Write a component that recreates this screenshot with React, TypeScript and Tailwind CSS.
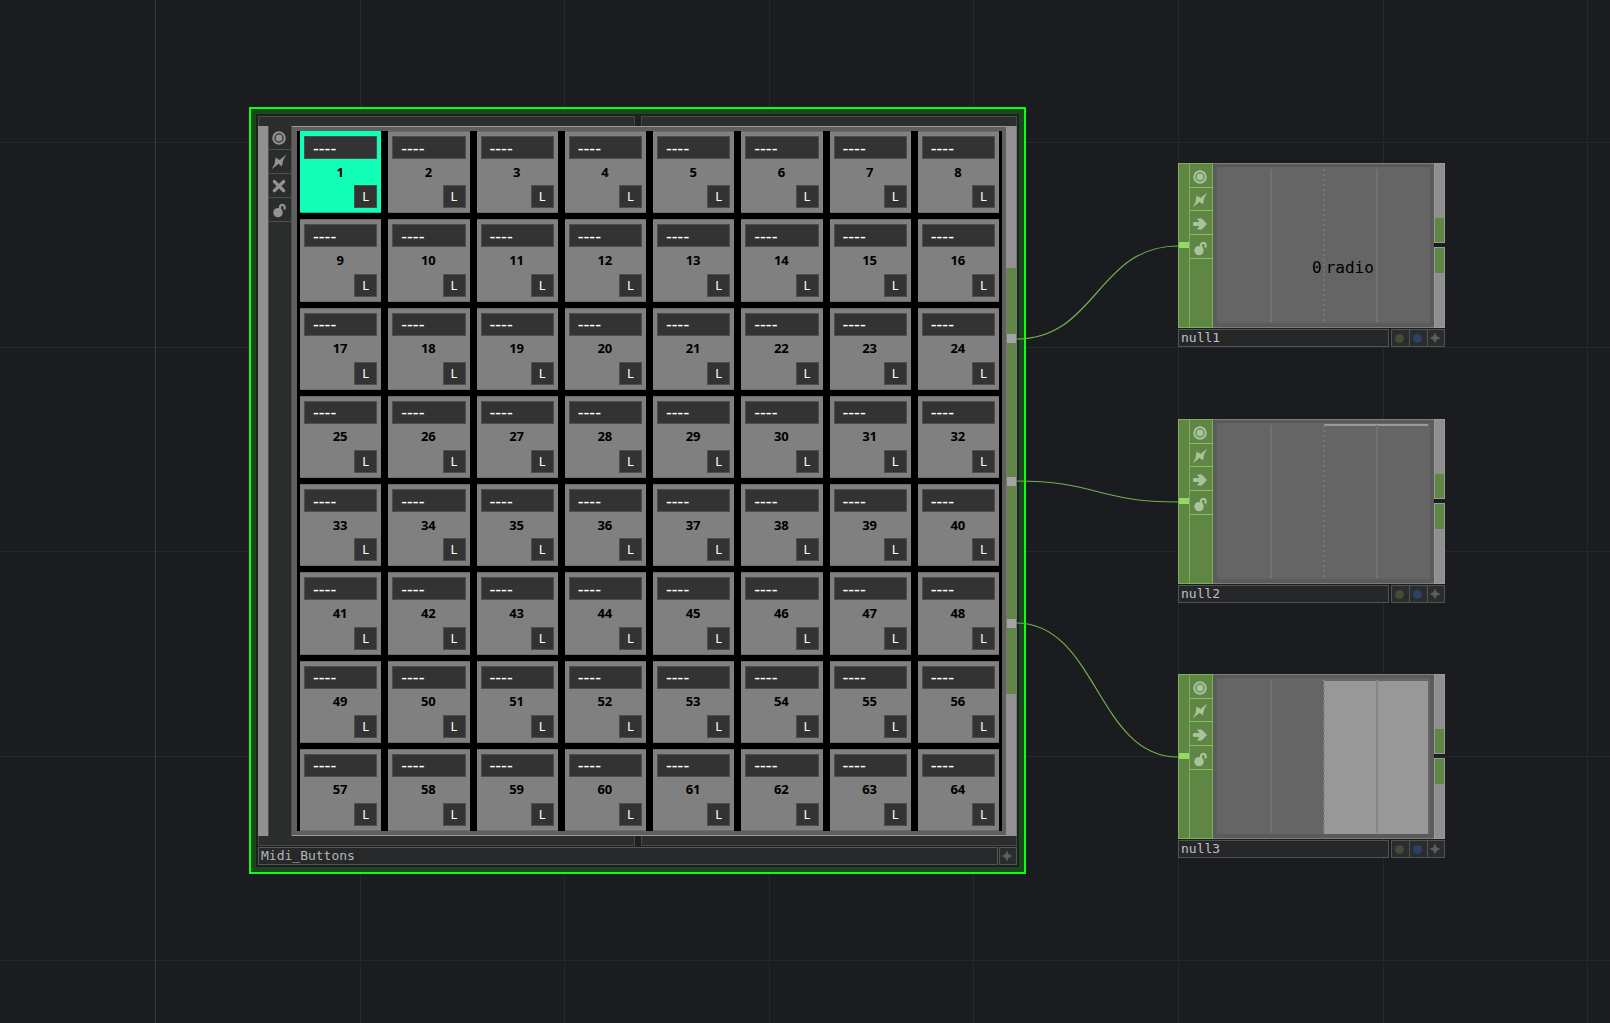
import React from 'react';

type IconKind = 'viewer' | 'bypass' | 'close' | 'arrow' | 'lock';

const LABELS: Record<IconKind, string> = {
  viewer: 'Viewer active',
  bypass: 'Clone immune',
  close: 'Bypass',
  arrow: 'Export',
  lock: 'Lock',
};

function Icon({ kind }: { kind: IconKind }) {
  return (
    <svg viewBox="0 0 16 16" className="size-4" aria-hidden="true">
      {kind === 'viewer' && (
        <>
          <circle cx="8" cy="8" r="5.7" fill="none" stroke="currentColor" strokeWidth="2.1" />
          <circle cx="8" cy="8" r="3.4" fill="currentColor" />
        </>
      )}
      {kind === 'bypass' && <path d="M.8 15.3 L3.6 10 L4.6 3.4 L8.6 6 L15.2 .7 L12.2 6.2 L10.8 12.4 L7.6 9.8 Z" fill="currentColor" />}
      {kind === 'close' && <path d="M3.4 3.6 L12.6 12.6 M12.6 3.6 L3.4 12.6" stroke="currentColor" strokeWidth="3.4" strokeLinecap="round" />}
      {kind === 'arrow' && (
        <>
          <path d="M2.6 8 H10" stroke="currentColor" strokeWidth="3.8" strokeLinecap="round" />
          <path d="M5 2.6 H9.6 L15 8 L9.6 13.4 H5 L8.8 8 Z" fill="currentColor" />
        </>
      )}
      {kind === 'lock' && (
        <>
          <circle cx="7" cy="10.6" r="4.7" fill="currentColor" />
          <path d="M9 7 V4.4 A2.5 2.5 0 0 1 13.6 4.4 V7.4" fill="none" stroke="currentColor" strokeWidth="2.2" />
        </>
      )}
    </svg>
  );
}

function Star() {
  return (
    <svg viewBox="0 0 12 12" className="size-3" aria-hidden="true">
      <path d="M6 .5 L7.7 4.3 L11.5 6 L7.7 7.7 L6 11.5 L4.3 7.7 L.5 6 L4.3 4.3 Z" fill="#5d5f5e" />
    </svg>
  );
}

function Rails({ edge }: { edge: string }) {
  return (
    <div className="flex h-[10px] gap-[6px]">
      <div className={`flex-1 border-x border-[#46484a] bg-[#2c2e2d] ${edge}`} />
      <div className={`flex-1 border-x border-[#46484a] bg-[#2c2e2d] ${edge}`} />
    </div>
  );
}

function Pad({ n, active }: { n: number; active: boolean }) {
  return (
    <div
      className={`grid grid-rows-[23px_1fr_23px] border-y px-1 py-1 ${
        active ? 'border-[#12ffb8] border-b-[#0fb98a] bg-[#12ffb8]' : 'border-[#6c6c6c] bg-[#808080]'
      }`}
    >
      <div className="flex items-center border border-[#4e4e4e] bg-[#333333] pl-2 text-[18px] leading-none text-white">----</div>
      <button type="button" className="flex items-center justify-center pr-px text-[13px] leading-none font-bold text-black">
        {n}
      </button>
      <button
        type="button"
        aria-label={`Learn ${n}`}
        className="flex size-[23px] items-center justify-center justify-self-end border border-[#4e4e4e] bg-[#333333] text-[13px] leading-none text-white"
      >
        L
      </button>
    </div>
  );
}

function MidiNode() {
  const pads = Array.from({ length: 64 }, (_, i) => i + 1);
  return (
    <section className="absolute top-[107px] left-[249px] border-2 border-[#0cff0c] bg-[#18481b] p-[5px]">
      <div className="bg-[#1e1f23] p-0.5">
        <Rails edge="border-t" />
        <div className="flex">
          <div className="w-[10px] bg-[#919191]" />
          <div className="w-6 border-x border-[#4f5050] bg-[#2b2d2c] text-[#939393]">
            {(['viewer', 'bypass', 'close', 'lock'] as IconKind[]).map((k) => (
              <button key={k} type="button" aria-label={LABELS[k]} className="flex h-6 w-full items-center justify-center border-b border-[#4f5050] pt-px pr-0.5">
                <Icon kind={k} />
              </button>
            ))}
          </div>
          <div className="border-y border-[#979797] bg-[#5f5f5f] py-1 pr-1 pl-[5px]">
            <div className="bg-black px-[3px]">
              <div className="grid h-[700px] w-[699px] grid-cols-8 grid-rows-8 gap-x-[7px] gap-y-[6px] font-['Noto_Sans',sans-serif]">
                {pads.map((n) => (
                  <Pad key={n} n={n} active={n === 1} />
                ))}
              </div>
            </div>
          </div>
          <div className="w-[11px] border-r border-[#77787a] bg-[#919191] pt-[142px]">
            <div className="flex h-[426px] flex-col justify-between border-l border-[#77787a] bg-[#5f8644] py-[66px]">
              <div className="h-[9px] bg-[#a3a3a8]" />
              <div className="h-[9px] bg-[#a3a3a8]" />
              <div className="h-[9px] bg-[#a3a3a8]" />
            </div>
          </div>
        </div>
        <Rails edge="border-b" />
        <div className="mt-px flex h-[18px] gap-px">
          <div className="flex flex-1 items-center border border-[#55575a] bg-[#27282a] pl-0.5 font-['DejaVu_Sans_Mono',monospace] text-[13px] leading-4 text-[#b5b5b5]">
            Midi_Buttons
          </div>
          <button type="button" aria-label="Activate viewer" className="flex w-[18px] items-center justify-center border border-[#55575a] bg-[#2b2d2c] pr-0.5">
            <Star />
          </button>
        </div>
      </div>
    </section>
  );
}

function NullPlot({ kind }: { kind: string }) {
  return (
    <svg viewBox="0 0 213 156" className="block h-[156px] w-[213px]" aria-hidden="true">
      <rect width="213" height="156" fill="#656565" />
      {kind === 'null2' && <rect x="107" y="1" width="104" height="2" fill="#9a9a9a" />}
      {kind === 'null3' && <rect x="107" y="3" width="104" height="153" fill="#989898" />}
      <path d="M54 2V155" stroke="#727272" strokeWidth="2" />
      <path d="M160 2V155" stroke={kind === 'null3' ? '#868686' : '#727272'} strokeWidth="2" />
      <path d="M107 2V155" stroke={kind === 'null3' ? '#858585' : '#767676'} strokeWidth="2" strokeDasharray="2 3" />
    </svg>
  );
}

function NullNode({ name, place }: { name: string; place: string }) {
  return (
    <section className={`absolute left-[1178px] w-[267px] ${place}`}>
      <div className="flex h-[165px]">
        <div className="w-[11px] border border-r-0 border-[#78b453] bg-[#5f8644] pt-[78px]">
          <div className="h-[6px] bg-[#92d968]" />
        </div>
        <div className="w-6 border border-[#78b453] bg-[#5f8644] text-[#a9c49c]">
          {(['viewer', 'bypass', 'arrow', 'lock'] as IconKind[]).map((k) => (
            <button key={k} type="button" aria-label={LABELS[k]} className="flex h-6 w-full items-center justify-center border-b border-[#80c758] pt-0.5 pr-0.5 [&:nth-child(2)]:h-[23px]">
              <Icon kind={k} />
            </button>
          ))}
        </div>
        <div className="relative flex-1 border-y border-[#7d7d7d] bg-[#5b5b5b] py-[3px] pl-1">
          <NullPlot kind={name} />
          {name === 'null1' && (
            <div className="absolute top-[94px] left-[99px] flex gap-1 font-['DejaVu_Sans_Mono',monospace] text-[16px] leading-5 text-black">
              <span>0</span>
              <span>radio</span>
            </div>
          )}
        </div>
        <div className="flex w-[11px] flex-col justify-between">
          <div className="flex h-[80px] flex-col justify-end border border-[#9a9a9a] bg-[#8f8f8f]">
            <div className="h-6 bg-[#5f8644]" />
          </div>
          <div className="h-[81px] border border-[#9a9a9a] bg-[#8f8f8f]">
            <div className="h-[25px] bg-[#5f8644]" />
          </div>
        </div>
      </div>
      <div className="mt-px flex h-[18px]">
        <div className="mr-0.5 flex flex-1 items-center border border-[#505256] bg-[#262729] pl-0.5 font-['DejaVu_Sans_Mono',monospace] text-[13px] leading-4 text-[#c0c0c0]">
          {name}
        </div>
        <button type="button" aria-label="Display" className="flex w-[18px] items-center justify-center border border-r-0 border-[#505256] bg-[#2b2d2c] pr-0.5">
          <span className="size-[9px] rounded-full bg-[#424c37]" />
        </button>
        <button type="button" aria-label="Render" className="flex w-[18px] items-center justify-center border border-r-0 border-[#505256] bg-[#2b2d2c] pr-0.5">
          <span className="size-[9px] rounded-full bg-[#2e4065]" />
        </button>
        <button type="button" aria-label="Activate viewer" className="flex w-[18px] items-center justify-center border border-[#505256] bg-[#2b2d2c] pr-0.5">
          <Star />
        </button>
      </div>
    </section>
  );
}

export default function App() {
  return (
    <main className="relative min-h-screen overflow-hidden bg-[#1b1c20]">
      <svg className="absolute inset-0 h-full w-full" aria-hidden="true">
        {[360, 564, 769, 973, 1178, 1383, 1587].map((x) => (
          <rect key={x} x={x} y="0" width="1" height="100%" fill="#25272b" />
        ))}
        {[142, 347, 551, 756, 960].map((y) => (
          <rect key={y} x="0" y={y} width="100%" height="1" fill="#25272b" />
        ))}
        <rect x="155" y="0" width="1" height="100%" fill="#38393d" />
      </svg>
      <MidiNode />
      <NullNode name="null1" place="top-[163px]" />
      <NullNode name="null2" place="top-[419px]" />
      <NullNode name="null3" place="top-[674px]" />
      <svg className="pointer-events-none absolute inset-0 h-full w-full" fill="none" stroke="#72b14b" strokeWidth="1.2" aria-hidden="true">
        <path d="M1016 339 C1097 339 1097 246 1178 246" />
        <path d="M1016 481 C1097 481 1097 502 1178 502" />
        <path d="M1016 623 C1097 623 1097 757 1178 757" />
      </svg>
    </main>
  );
}
